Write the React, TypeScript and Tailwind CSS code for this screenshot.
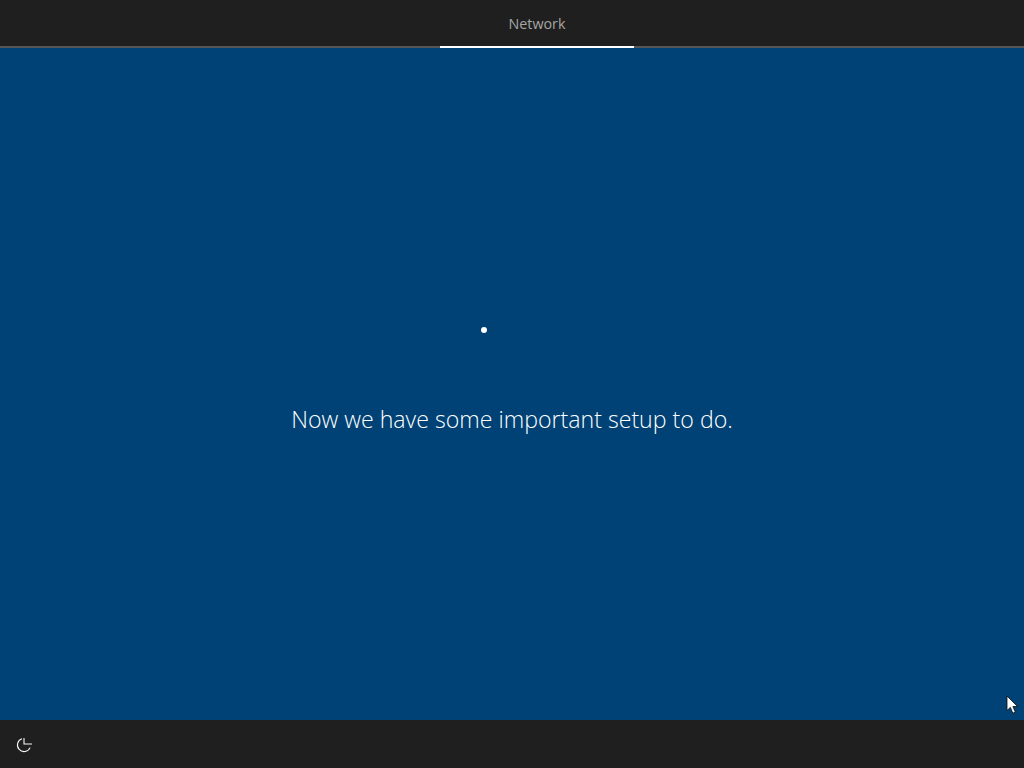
export default function App() {
  return (
    <div className="relative flex h-[768px] w-[1024px] flex-col overflow-hidden bg-[#004275] font-['Open_Sans','Liberation_Sans',sans-serif]">
      {/* top tab bar */}
      <header className="flex h-[48px] shrink-0 border-b-2 border-[#565656] bg-[#1f1f1f]">
        <div className="-mb-[2px] ml-[440px] flex h-[48px] w-[194px] items-center justify-center border-b-2 border-white pt-[2px] text-[14.3px] text-[#a6a6a6]">
          Network
        </div>
      </header>

      <main className="flex flex-1 flex-col items-center pt-[279px]">
        <div className="mr-[57px] h-[6px] w-[6px] rounded-full bg-white" />
        <p className="mt-[70px] text-[23.15px] font-[350] leading-[32px] text-white">
          Now we have some important setup to do.
        </p>
      </main>

      {/* bottom bar */}
      <footer className="flex h-[48px] shrink-0 items-center bg-[#1f1f1f] pl-[16px]">
        <svg width="17" height="20" viewBox="0 0 17 20" fill="none" stroke="#f5f5f5" strokeWidth="1.1">
          <path d="M14.1 13.6A6.6 6.6 0 1 1 6 4.7" />
          <path d="M8 4V10H16" />
        </svg>
      </footer>

      {/* mouse pointer */}
      <svg className="absolute left-[1006px] top-[695px]" width="13" height="20" viewBox="0 0 13 20">
        <path d="M1 1V15.5L4.4 12.4L6.8 18.2L9.3 17.1L6.9 11.5H11.5Z" fill="#ffffff" stroke="#0a0a0a" strokeWidth="0.8" />
      </svg>
    </div>
  )
}
